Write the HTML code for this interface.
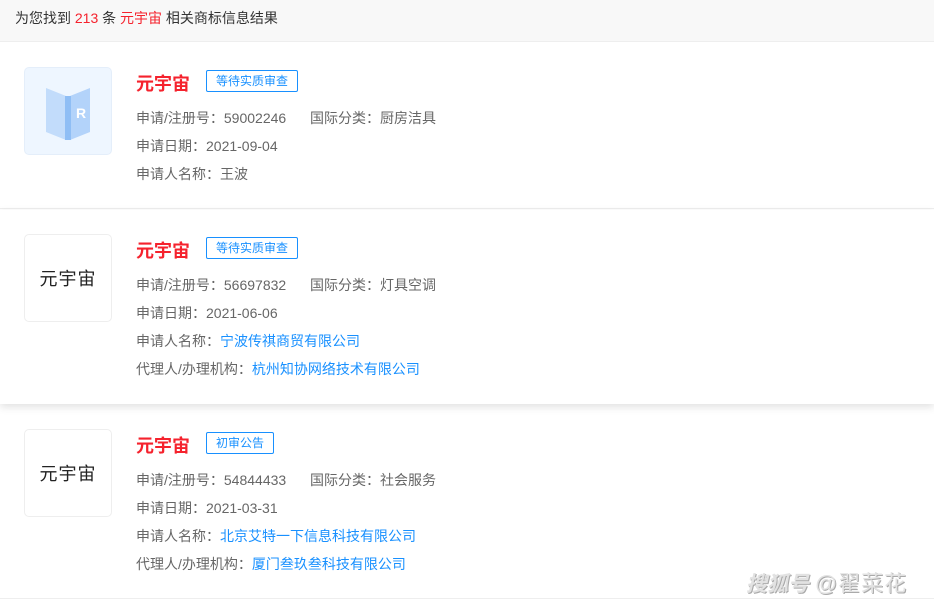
<!DOCTYPE html>
<html><head><meta charset="utf-8"><style>
*{margin:0;padding:0;box-sizing:border-box}
body{width:934px;height:600px;overflow:hidden;background:#fff;font-family:"Liberation Sans","Noto Sans CJK SC",sans-serif;position:relative}
.hdr{height:42px;background:#f8f8f8;border-bottom:1px solid #eee;font-size:14px;color:#333;padding-left:15px;line-height:36px}
.r{color:#f5222d}
.card{position:absolute;left:0;width:934px;background:#fff}
.logo{position:absolute;left:24px;width:88px;height:88px;border:1px solid #eee;border-radius:5px;display:flex;align-items:center;justify-content:center;font-size:18px;color:#222;letter-spacing:1px}
.title{position:absolute;left:136px;font-size:18px;font-weight:bold;color:#f5222d;line-height:24px}
.tag{position:absolute;left:206px;height:22px;border:1px solid #1890ff;border-radius:2px;color:#1890ff;font-size:12px;line-height:20px;padding:0 9px}
.row{position:absolute;left:136px;font-size:14px;color:#666;line-height:20px;white-space:nowrap}
.row .c{position:absolute;left:174px}
.b{color:#1890ff}
</style></head><body>
<div class="hdr">为您找到 <span class="r">213</span> 条 <span class="r">元宇宙</span> 相关商标信息结果</div>

<div class="card" style="top:43px;height:166px;border-bottom:1px solid #eee">
<div class="logo" style="top:24px;background:#eef6ff;border-color:#e4eefa">
<svg width="60" height="70" viewBox="0 0 60 70"><path d="M8 12 L28 20 L28 64 L8 56Z" fill="#c2dcfb"/><path d="M32 20 L52 12 L52 56 L32 64Z" fill="#b3d3fa"/><rect x="27" y="20" width="6" height="44" fill="#8fbef5"/><text x="38" y="42" font-size="14" fill="#fff" font-weight="bold" font-family="Liberation Sans">R</text></svg>
</div>
<div class="title" style="top:29px">元宇宙</div>
<div class="tag" style="top:27px">等待实质审查</div>
<div class="row" style="top:65px">申请/注册号：59002246<span class="c">国际分类：厨房洁具</span></div>
<div class="row" style="top:93px">申请日期：2021-09-04</div>
<div class="row" style="top:121px">申请人名称：王波</div>
</div>

<div class="card" style="top:210px;height:194px;box-shadow:0 3px 8px rgba(0,0,0,0.12);z-index:2">
<div class="logo" style="top:24px">元宇宙</div>
<div class="title" style="top:29px">元宇宙</div>
<div class="tag" style="top:27px">等待实质审查</div>
<div class="row" style="top:65px">申请/注册号：56697832<span class="c">国际分类：灯具空调</span></div>
<div class="row" style="top:93px">申请日期：2021-06-06</div>
<div class="row" style="top:121px">申请人名称：<span class="b">宁波传祺商贸有限公司</span></div>
<div class="row" style="top:149px">代理人/办理机构：<span class="b">杭州知协网络技术有限公司</span></div>
</div>

<div class="card" style="top:405px;height:194px;border-bottom:1px solid #eee">
<div class="logo" style="top:24px">元宇宙</div>
<div class="title" style="top:29px">元宇宙</div>
<div class="tag" style="top:27px">初审公告</div>
<div class="row" style="top:65px">申请/注册号：54844433<span class="c">国际分类：社会服务</span></div>
<div class="row" style="top:93px">申请日期：2021-03-31</div>
<div class="row" style="top:121px">申请人名称：<span class="b">北京艾特一下信息科技有限公司</span></div>
<div class="row" style="top:149px">代理人/办理机构：<span class="b">厦门叁玖叁科技有限公司</span></div>
</div>

<div style="position:absolute;left:746px;top:566px;font-size:21px;color:#e2e2e2;z-index:5;text-shadow:1px 1px 0 #aaa;white-space:nowrap"><span style="font-style:italic;font-weight:bold">搜狐号</span> <span style="font-size:22px;letter-spacing:1px">@翟菜花</span></div>
</body></html>
